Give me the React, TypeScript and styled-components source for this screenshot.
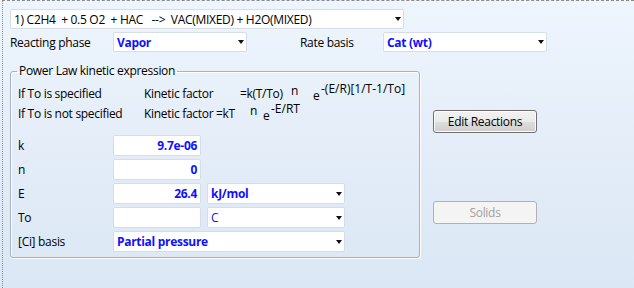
import React from 'react';
import styled, { createGlobalStyle } from 'styled-components';

const GlobalStyle = createGlobalStyle`
  html, body {
    margin: 0;
    padding: 0;
  }
  body {
    font-family: 'Segoe UI', 'Open Sans', sans-serif;
    font-size: 12px;
    letter-spacing: -0.3px;
    color: #000;
  }
`;

const Page = styled.div`
  width: 634px;
  height: 288px;
  overflow: hidden;
  background: linear-gradient(to bottom, #eef5fd 0%, #e4edf8 50%, #dbe7f5 100%);
`;

const Frame = styled.div`
  margin-left: 2px;
  height: 100%;
  box-sizing: border-box;
  border-top: 1px dashed #8a8a8a;
  border-left: 1px dotted #8a8a8a;
  padding: 8px 0 0 7px;
`;

const Row = styled.div`
  display: flex;
  align-items: center;
  margin-top: 3px;
`;

const Label = styled.div<{ $w: number; $ml?: number }>`
  width: ${p => p.$w}px;
  margin-left: ${p => p.$ml ?? 0}px;
  flex: none;
  white-space: nowrap;
`;

const ComboBox = styled.div<{ $w: number; $bold?: boolean; $blue?: boolean; $h?: number }>`
  position: relative;
  width: ${p => p.$w}px;
  height: ${p => p.$h ?? 21}px;
  box-sizing: border-box;
  flex: none;
  display: flex;
  align-items: center;
  padding: 0 14px 0 3px;
  background: #fff;
  border: 1px solid #d7dde5;
  border-radius: 2px;
  font-weight: ${p => (p.$bold ? 700 : 400)};
  color: ${p => (p.$blue ? '#1010ff' : '#000')};
  white-space: pre;
  overflow: hidden;
`;

const Arrow = styled.span`
  position: absolute;
  right: 2px;
  top: 50%;
  margin-top: -2px;
  width: 0;
  height: 0;
  border-left: 3.5px solid transparent;
  border-right: 3.5px solid transparent;
  border-top: 4px solid #111;
`;

const TextBox = styled.div<{ $w: number }>`
  width: ${p => p.$w}px;
  height: 21px;
  box-sizing: border-box;
  flex: none;
  display: flex;
  align-items: center;
  justify-content: flex-end;
  padding: 0 3px;
  background: #fff;
  border: 1px solid #d7dde5;
  border-radius: 2px;
  font-weight: 700;
  color: #1010ff;
`;

const Main = styled.div`
  display: flex;
  margin-top: 12px;
`;

const Group = styled.fieldset`
  width: 410px;
  height: 194px;
  box-sizing: border-box;
  margin: 0;
  padding: 5px 7px 0 7px;
  border: 1px solid #a3b2c6;
  border-radius: 3px;
  box-shadow: inset 1px 1px 0 #fff, 1px 1px 0 #fff;
`;

const Legend = styled.legend`
  padding: 0 2px;
  margin-left: -1px;
  line-height: 14px;
`;

const FormulaRow = styled.div`
  display: flex;
  height: 20px;
  align-items: center;
  white-space: nowrap;
`;

const Cell = styled.span<{ $w?: number }>`
  display: inline-block;
  flex: none;
  width: ${p => (p.$w ? `${p.$w}px` : 'auto')};
`;

const Sup = styled.span<{ $up: number; $w?: number }>`
  position: relative;
  flex: none;
  top: ${p => -p.$up}px;
  width: ${p => (p.$w ? `${p.$w}px` : 'auto')};
  letter-spacing: 0;
`;

const Fields = styled.div`
  display: flex;
  flex-direction: column;
  gap: 3px;
  margin-top: 12px;
`;

const FieldRow = styled.div`
  display: flex;
  align-items: center;
  gap: 6px;
`;

const FieldLabel = styled.div`
  width: 89px;
  flex: none;
`;

const Side = styled.div`
  margin-left: 13px;
  padding-top: 46px;
  display: flex;
  flex-direction: column;
  gap: 68px;
`;

const Button = styled.button<{ $disabled?: boolean }>`
  width: 104px;
  height: 23px;
  box-sizing: border-box;
  padding: 0;
  font: inherit;
  letter-spacing: inherit;
  border-radius: 3px;
  border: 1px solid ${p => (p.$disabled ? '#adb2b5' : '#707070')};
  background: ${p =>
    p.$disabled
      ? '#f4f4f4'
      : 'linear-gradient(to bottom, #f2f2f2 0%, #ebebeb 50%, #dddddd 51%, #cfcfcf 100%)'};
  color: ${p => (p.$disabled ? '#a0a0a0' : '#000')};
  box-shadow: ${p => (p.$disabled ? 'none' : 'inset 0 0 0 1px #fcfcfc')};
`;

const App: React.FC = () => {
  return (
    <Page>
      <GlobalStyle />
      <Frame>
        <ComboBox $w={394} $h={20}>
          {'1) C2H4  + 0.5 O2  + HAC   -->  VAC(MIXED) + H2O(MIXED)'}
          <Arrow />
        </ComboBox>

        <Row>
          <Label $w={103}>Reacting phase</Label>
          <ComboBox $w={134} $h={20} $bold $blue>
            Vapor
            <Arrow />
          </ComboBox>
          <Label $w={83} $ml={53}>Rate basis</Label>
          <ComboBox $w={164} $h={20} $bold $blue>
            Cat (wt)
            <Arrow />
          </ComboBox>
        </Row>

        <Main>
          <Group>
            <Legend>Power Law kinetic expression</Legend>

            <FormulaRow>
              <Cell $w={126}>If To is specified</Cell>
              <Cell $w={96}>Kinetic factor</Cell>
              <Cell $w={51}>=k(T/To)</Cell>
              <Sup $up={3} $w={22}>n</Sup>
              <Sup $up={-2} $w={8}>e</Sup>
              <Sup $up={5}>-(E/R)[1/T-1/To]</Sup>
            </FormulaRow>

            <FormulaRow>
              <Cell $w={126}>If To is not specified</Cell>
              <Cell $w={72}>Kinetic factor</Cell>
              <Cell $w={34}>=kT</Cell>
              <Sup $up={3} $w={13}>n</Sup>
              <Sup $up={-2} $w={8}>e</Sup>
              <Sup $up={5}>-E/RT</Sup>
            </FormulaRow>

            <Fields>
              <FieldRow>
                <FieldLabel>k</FieldLabel>
                <TextBox $w={88}>9.7e-06</TextBox>
              </FieldRow>
              <FieldRow>
                <FieldLabel>n</FieldLabel>
                <TextBox $w={88}>0</TextBox>
              </FieldRow>
              <FieldRow>
                <FieldLabel>E</FieldLabel>
                <TextBox $w={88}>26.4</TextBox>
                <ComboBox $w={138} $bold $blue>
                  kJ/mol
                  <Arrow />
                </ComboBox>
              </FieldRow>
              <FieldRow>
                <FieldLabel>To</FieldLabel>
                <TextBox $w={88} />
                <ComboBox $w={138} $blue>
                  C
                  <Arrow />
                </ComboBox>
              </FieldRow>
              <FieldRow>
                <FieldLabel>[Ci] basis</FieldLabel>
                <ComboBox $w={232} $bold $blue>
                  Partial pressure
                  <Arrow />
                </ComboBox>
              </FieldRow>
            </Fields>
          </Group>

          <Side>
            <Button>Edit Reactions</Button>
            <Button $disabled>Solids</Button>
          </Side>
        </Main>
      </Frame>
    </Page>
  );
};

export default App;
